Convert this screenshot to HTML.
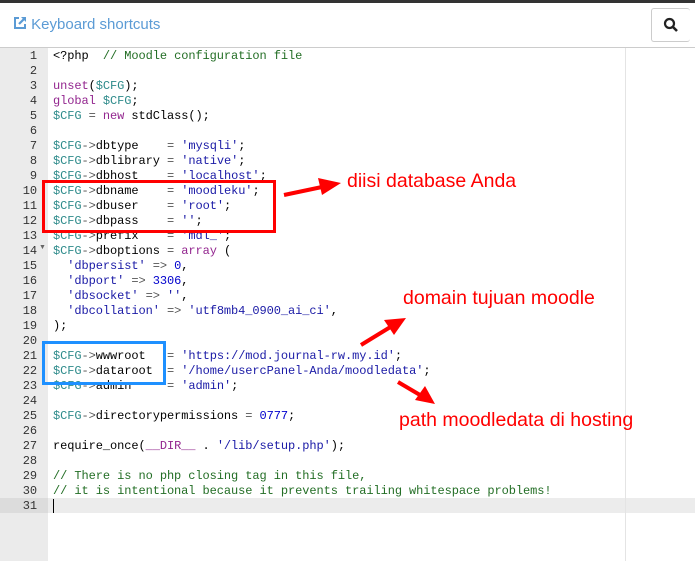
<!DOCTYPE html>
<html><head><meta charset="utf-8"><style>
body{margin:0;width:695px;height:561px;overflow:hidden;background:#fff;position:relative;font-family:"Liberation Sans",sans-serif}
.top{position:absolute;left:0;top:0;width:695px;height:3px;background:#333}
.hdr{position:absolute;left:13px;top:16px;font-size:15px;color:#5b9bd5}
.sbtn{position:absolute;left:651px;top:8px;width:38px;height:32px;border:1px solid #ccc;border-radius:3px;border-right:none}
.hline{position:absolute;left:0;top:47px;width:695px;height:1px;background:#ccc}
.gut{position:absolute;left:0;top:48px;width:48px;height:513px;background:#ebebeb}
.pm{position:absolute;left:625px;top:48px;width:1px;height:513px;background:#e4e4e4}
.act{position:absolute;left:48px;top:498px;width:647px;height:15px;background:#ececec}
.actg{position:absolute;left:0;top:498px;width:48px;height:15px;background:#dcdcdc}
pre{margin:0;font-family:"Liberation Mono",monospace;font-size:12px;letter-spacing:-0.08px;line-height:15px}
.nums{position:absolute;left:0;top:49px;width:37px;text-align:right;color:#333}
.code{position:absolute;left:53px;top:49px;color:#000}
.v{color:#2e8b8b}.k{color:#93268f}.s{color:#1a1aa6}.c{color:#236e25}.n{color:#0000cd}.o{color:#555}
.ann{position:absolute;color:#f00;font-size:19.5px;white-space:nowrap}
.tri{position:absolute;left:39px;top:244px;font-size:7px;color:#666}
</style></head><body>
<div class="top"></div>
<div class="hdr"><svg width="14" height="14" viewBox="0 0 14 14" style="vertical-align:-1px"><path d="M6 2H2v10h10V8" fill="none" stroke="#5b9bd5" stroke-width="2"/><path d="M8 1h5v5z" fill="#5b9bd5"/><path d="M12 2L6 8" stroke="#5b9bd5" stroke-width="2.2"/></svg> Keyboard shortcuts</div>
<div class="sbtn"><svg width="16" height="16" viewBox="0 0 16 16" style="position:absolute;left:11px;top:8px"><circle cx="6.5" cy="6.5" r="4.5" fill="none" stroke="#222" stroke-width="2.2"/><path d="M10 10l4 4" stroke="#222" stroke-width="2.6"/></svg></div>
<div class="hline"></div>
<div class="gut"></div>
<div class="actg"></div>
<div class="act"></div>
<div class="pm"></div>
<pre class="nums">1
2
3
4
5
6
7
8
9
10
11
12
13
14
15
16
17
18
19
20
21
22
23
24
25
26
27
28
29
30
31</pre>
<div class="tri">▼</div>
<pre class="code">&lt;?php  <span class="c">// Moodle configuration file</span>

<span class="k">unset</span>(<span class="v">$CFG</span>);
<span class="k">global</span> <span class="v">$CFG</span>;
<span class="v">$CFG</span> <span class="o">=</span> <span class="k">new</span> stdClass();

<span class="v">$CFG</span><span class="o">-&gt;</span>dbtype    <span class="o">=</span> <span class="s">'mysqli'</span>;
<span class="v">$CFG</span><span class="o">-&gt;</span>dblibrary <span class="o">=</span> <span class="s">'native'</span>;
<span class="v">$CFG</span><span class="o">-&gt;</span>dbhost    <span class="o">=</span> <span class="s">'localhost'</span>;
<span class="v">$CFG</span><span class="o">-&gt;</span>dbname    <span class="o">=</span> <span class="s">'moodleku'</span>;
<span class="v">$CFG</span><span class="o">-&gt;</span>dbuser    <span class="o">=</span> <span class="s">'root'</span>;
<span class="v">$CFG</span><span class="o">-&gt;</span>dbpass    <span class="o">=</span> <span class="s">''</span>;
<span class="v">$CFG</span><span class="o">-&gt;</span>prefix    <span class="o">=</span> <span class="s">'mdl_'</span>;
<span class="v">$CFG</span><span class="o">-&gt;</span>dboptions <span class="o">=</span> <span class="k">array</span> (
  <span class="s">'dbpersist'</span> <span class="o">=&gt;</span> <span class="n">0</span>,
  <span class="s">'dbport'</span> <span class="o">=&gt;</span> <span class="n">3306</span>,
  <span class="s">'dbsocket'</span> <span class="o">=&gt;</span> <span class="s">''</span>,
  <span class="s">'dbcollation'</span> <span class="o">=&gt;</span> <span class="s">'utf8mb4_0900_ai_ci'</span>,
);

<span class="v">$CFG</span><span class="o">-&gt;</span>wwwroot   <span class="o">=</span> <span class="s">'https://mod.journal-rw.my.id'</span>;
<span class="v">$CFG</span><span class="o">-&gt;</span>dataroot  <span class="o">=</span> <span class="s">'/home/usercPanel-Anda/moodledata'</span>;
<span class="v">$CFG</span><span class="o">-&gt;</span>admin     <span class="o">=</span> <span class="s">'admin'</span>;

<span class="v">$CFG</span><span class="o">-&gt;</span>directorypermissions <span class="o">=</span> <span class="n">0777</span>;

require_once(<span class="k">__DIR__</span> . <span class="s">'/lib/setup.php'</span>);

<span class="c">// There is no php closing tag in this file,</span>
<span class="c">// it is intentional because it prevents trailing whitespace problems!</span>
<span style="border-left:1px solid #000"> </span></pre>
<svg width="695" height="561" style="position:absolute;left:0;top:0">
<rect x="43.5" y="181.5" width="231" height="50" fill="none" stroke="#f00" stroke-width="3"/>
<rect x="43.5" y="342.5" width="121" height="41" fill="none" stroke="#1e90ff" stroke-width="3"/>
<g fill="#f00" stroke="#f00">
<path d="M284 195L322 187" stroke-width="4"/><path d="M341 183L318 178L322 195z" stroke="none"/>
<path d="M361 345L392 326" stroke-width="4"/><path d="M406 318L384 320L394 335z" stroke="none"/>
<path d="M398 382L420 395" stroke-width="4"/><path d="M435 404L425 386L415 400z" stroke="none"/>
</g>
</svg>
<div class="ann" style="left:347px;top:170px">diisi database Anda</div>
<div class="ann" style="left:403px;top:287px">domain tujuan moodle</div>
<div class="ann" style="left:399px;top:409px">path moodledata di hosting</div>
</body></html>
